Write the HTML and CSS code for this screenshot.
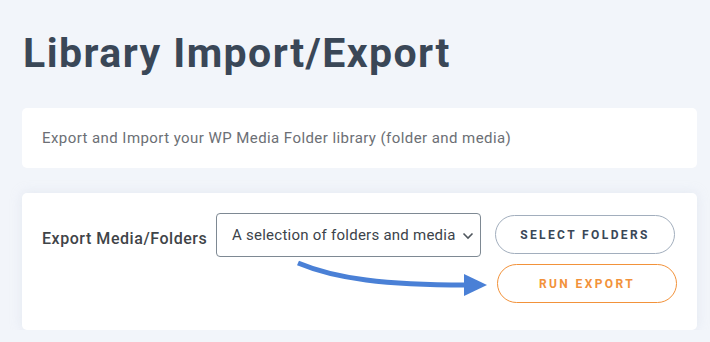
FILE: index.html
```html
<!DOCTYPE html>
<html lang="en">
<head>
    <meta charset="UTF-8">
    <meta name="viewport" content="width=device-width, initial-scale=1.0">
    <title>Library Import/Export</title>
    <link rel="stylesheet" href="styles.css">
</head>
<body>
    <div class="page">
        <h1 class="title">Library Import/Export</h1>

        <div class="card intro">
            <p>Export and Import your WP Media Folder library (folder and media)</p>
        </div>

        <div class="card export">
            <div class="export-row">
                <label class="export-label">Export Media/Folders</label>
                <div class="select-box">
                    <span>A selection of folders and media</span>
                    <svg class="chevron" width="12" height="8" viewBox="0 0 12 8">
                        <path d="M1.5 1.5 L6 6 L10.5 1.5" fill="none" stroke="#50575e" stroke-width="1.6"/>
                    </svg>
                </div>
                <div class="buttons">
                    <button class="btn btn-grey">Select folders</button>
                    <button class="btn btn-orange">Run export</button>
                </div>
            </div>

            <!-- arrow pointing at the run button -->
            <svg class="arrow" width="200" height="45" viewBox="0 0 200 45">
                <path d="M2 4 C40 20, 90 26, 170 26" fill="none" stroke="#4a80d6" stroke-width="5"/>
                <polygon points="168,15 191,26 168,37" fill="#4a80d6"/>
            </svg>
        </div>
    </div>
</body>
</html>
```

FILE: styles.css
```css
* {
    box-sizing: border-box;
    margin: 0;
    padding: 0;
}
body {
    font-family: Roboto, "Liberation Sans", sans-serif;
    background: #f2f5fa;
    color: #3c4858;
}
.page {
    padding: 29px 13px 0 22px;
}
.title {
    font-size: 41px;
    line-height: 48px;
    font-weight: 700;
    color: #3a4757;
    letter-spacing: 1.45px;
    margin-left: 1px;
}
.card {
    background: #fff;
    border-radius: 5px;
}
.intro {
    margin-top: 31px;
    height: 60px;
    display: flex;
    align-items: center;
    padding-left: 20px;
}
.intro p {
    font-size: 15px;
    font-weight: 400;
    color: #6c6f75;
    letter-spacing: 0.43px;
}
.export {
    position: relative;
    margin-top: 25px;
    padding: 20px 20px 27px 20px;
    box-shadow: 0 0 12px rgba(200, 210, 225, 0.35);
}
.export-row {
    display: flex;
    align-items: flex-start;
}
.export-label {
    font-size: 16px;
    font-weight: 500;
    color: #3f4448;
    margin-top: 16px;
    width: 176px;
    white-space: nowrap;
    letter-spacing: 0.55px;
}
.select-box {
    flex: none;
    width: 265px;
    height: 44px;
    border: 1px solid #7e8993;
    border-radius: 4px;
    display: flex;
    align-items: center;
    justify-content: space-between;
    padding: 0 6px 0 15px;
    font-size: 15px;
    color: #3c434a;
    letter-spacing: 0.25px;
    white-space: nowrap;
}
.chevron {
    margin-top: 1px;
}
.buttons {
    display: flex;
    flex-direction: column;
    gap: 10px;
    margin-left: 14px;
    margin-top: 2px;
}
.btn {
    width: 180px;
    height: 39px;
    border-radius: 20px;
    background: #fff;
    font-family: Roboto, "Liberation Sans", sans-serif;
    font-size: 12px;
    font-weight: 700;
    letter-spacing: 2.4px;
    text-transform: uppercase;
}
.btn-grey {
    border: 1px solid #a2aebd;
    color: #3a4757;
}
.btn-orange {
    border: 1px solid #f2923a;
    color: #f2923a;
    margin-left: 2px;
}
.arrow {
    position: absolute;
    left: 274px;
    top: 66px;
}
```
